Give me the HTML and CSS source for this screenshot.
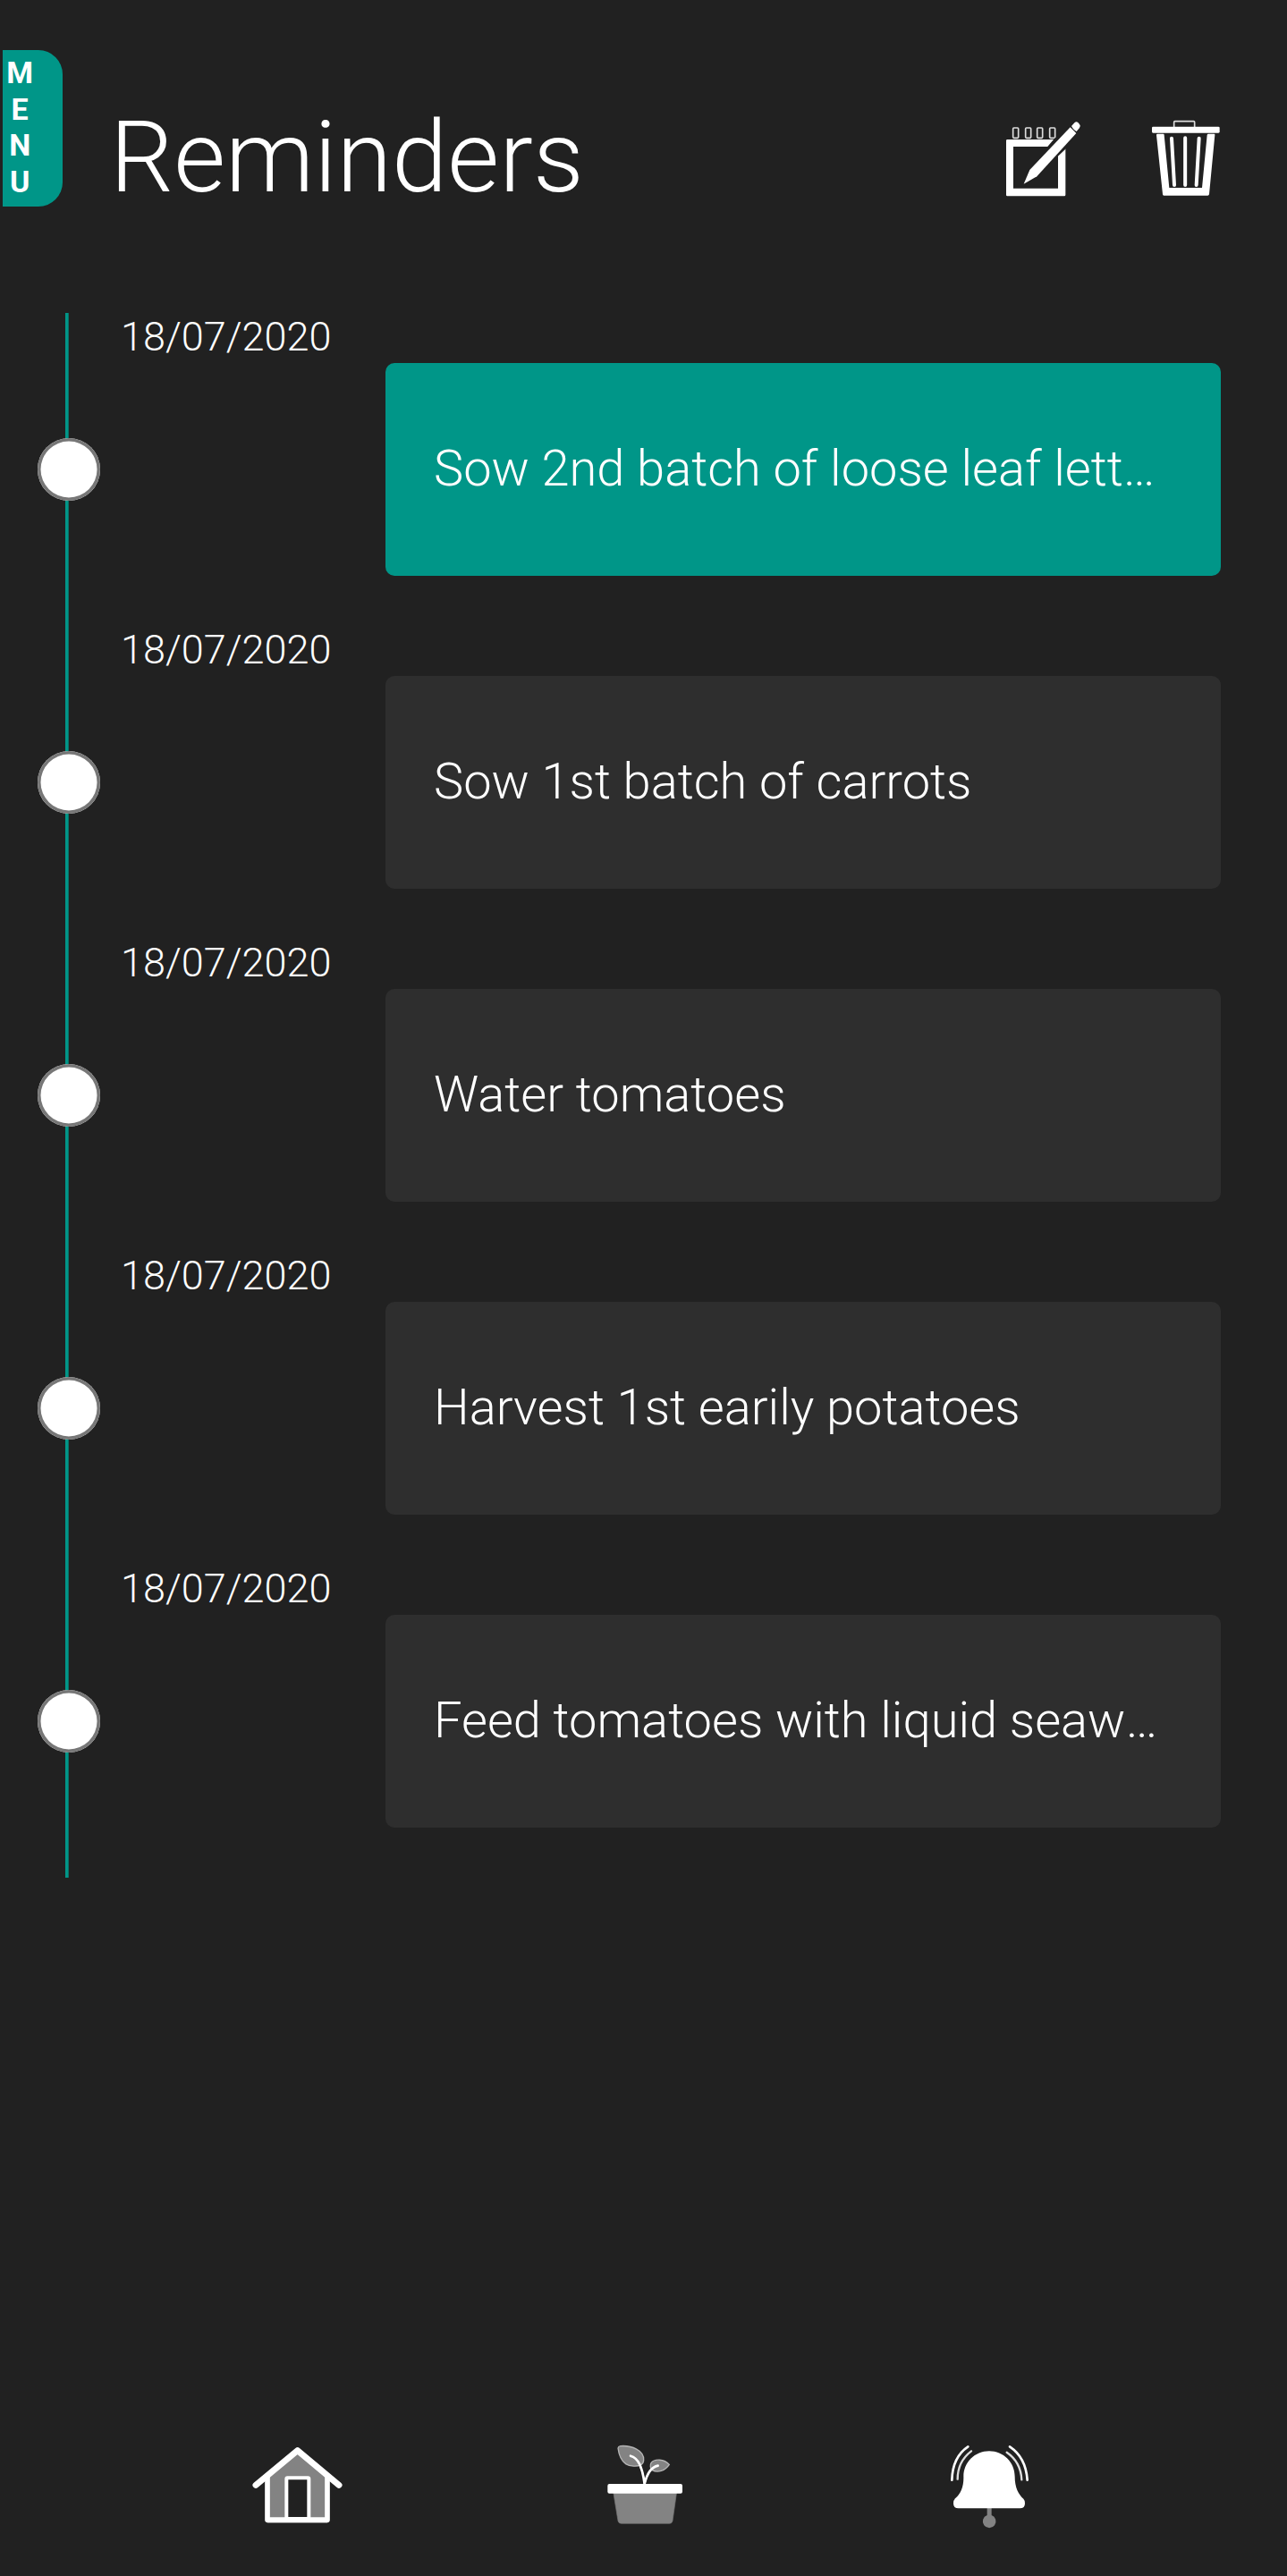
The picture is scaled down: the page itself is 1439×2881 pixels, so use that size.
FILE: index.html
```html
<!DOCTYPE html>
<html lang="en">
<head>
<meta charset="utf-8">
<title>Reminders</title>
<link rel="stylesheet" href="styles.css">
</head>
<body>
<div class="app">
  <header class="header">
    <button class="menu-tab"><span>M</span><span>E</span><span>N</span><span>U</span></button>
    <h1 class="title">Reminders</h1>
    <div class="actions">
      <svg class="action-icon" viewBox="0 0 390 390" aria-label="Edit">
        <g fill="none" stroke="#ddd" stroke-width="5">
          <rect x="98" y="99" width="18" height="34" rx="3"/><rect x="140" y="99" width="18" height="34" rx="3"/><rect x="179" y="99" width="18" height="34" rx="3"/><rect x="221" y="99" width="18" height="34" rx="3"/>
        </g>
        <path fill="#fff" fill-rule="evenodd" d="M79 138H274V324Q274 328 270 328H79Q75 328 75 324V142Q75 138 79 138ZM99 162V302H249V162Z"/>
        <path stroke="#212121" stroke-width="12" fill="#212121" stroke-linejoin="round" d="M242 138L154 242L143 267L168 262L274 162V138Z"/>
        <path fill="#fff" d="M134 287L154 240L290 97L310 117L178 262Z"/>
        <path fill="#fff" d="M294 93L305 81Q310 76 316 81L321 87Q326 92 321 99L311 111Q301 107 294 93Z"/>
      </svg>
      <svg class="action-icon" viewBox="0 0 390 390" aria-label="Delete">
        <path fill="none" stroke="#ddd" stroke-width="5" d="M143 97V80Q143 77 146 77H209Q212 77 212 80V97"/>
        <rect x="69" y="95" width="227" height="21" rx="4" fill="#fff"/>
        <path fill="#fff" d="M88 119H107Q110 119 110 123L127 300H237L254 123Q255 119 258 119H277Q281 119 280 123L261 322Q260 326 256 326H109Q105 326 105 322L84 123Q84 119 88 119Z"/>
        <path stroke="#fff" stroke-width="12" stroke-linecap="round" d="M135 134L144 291M180.500 133V291M227 134L218 291"/>
      </svg>
    </div>
  </header>
  <main class="timeline">
    <section class="row"><div class="rail"><i class="dot"></i></div><time class="date">18/07/2020</time><article class="card active">Sow 2nd batch of loose leaf lett<span>…</span></article></section>
    <section class="row"><div class="rail"><i class="dot"></i></div><time class="date">18/07/2020</time><article class="card">Sow 1st batch of carrots</article></section>
    <section class="row"><div class="rail"><i class="dot"></i></div><time class="date">18/07/2020</time><article class="card">Water tomatoes</article></section>
    <section class="row"><div class="rail"><i class="dot"></i></div><time class="date">18/07/2020</time><article class="card">Harvest 1st earily potatoes</article></section>
    <section class="row"><div class="rail"><i class="dot"></i></div><time class="date">18/07/2020</time><article class="card">Feed tomatoes with liquid seaw<span>…</span></article></section>
  </main>
  <nav class="nav">
    <svg class="nav-icon" viewBox="0 0 390 360" aria-label="Home">
      <path fill="#838383" d="M87 150L188 68L289 150V294H87Z"/>
      <path fill="none" stroke="#fff" stroke-width="17" stroke-linejoin="round" d="M87 146V295H288V146"/>
      <path fill="none" stroke="#fff" stroke-width="21" stroke-linecap="round" stroke-linejoin="round" d="M48 178L188 62L327 178"/>
      <rect x="151" y="154" width="75" height="137" rx="3" fill="#212121" stroke="#fff" stroke-width="12"/>
      <path stroke="#fff" stroke-width="17" d="M87 295H288"/>
    </svg>
    <svg class="nav-icon nav-plant" viewBox="0 0 390 360" aria-label="Plants">
      <path fill="#838383" stroke="#777" stroke-width="2" d="M77 200H290L276 298Q274 307 266 307H104Q95 307 93 298Z"/>
      <g fill="#838383" stroke="#b5b5b5" stroke-width="4">
        <path d="M93 54Q94 48 101 47C139 44 181 62 179 94C179 104 175 107 170 110C158 117 132 116 119 107C101 94 95 70 93 54Z"/>
        <path d="M265 109C248 91 216 88 204 104C200 111 201 122 208 128C226 138 251 130 265 109Z"/>
      </g>
      <path fill="none" stroke="#fff" stroke-width="8" stroke-linecap="round" d="M135 80C160 87 174 113 182 174C188 149 201 118 227 113"/>
      <path fill="none" stroke="#fff" stroke-width="5" d="M167 116Q179 137 182 176Q187 149 198 134"/>
      <rect x="58" y="174" width="251" height="32" rx="6" fill="#fff"/>
    </svg>
    <svg class="nav-icon" viewBox="0 0 390 360" aria-label="Reminders">
      <path fill="#838383" d="M191 250H206V279A22 22 0 1 1 191 279Z"/>
      <path fill="#fff" d="M112 149C112 102 150 64 198 64C246 64 284 102 284 149C284 186 296 208 313 224Q318 229 318 239Q318 256 301 256H95Q78 256 78 239Q78 229 84 223C103 207 113 183 112 149Z"/>
      <g fill="none" stroke="#fff" stroke-linecap="round"><path stroke-width="8" d="M127 49Q75 84 73 161M267 49Q321 85 326 161"/><path stroke="#ddd" stroke-width="7" d="M138 64Q92 99 92 158M257 68Q304 100 307 160"/></g>
    </svg>
  </nav>
</div>
</body>
</html>
```
FILE: styles.css
```css
* { box-sizing: border-box; }
body { margin: 0; background: #212121; color: #fff; font-family: Roboto, sans-serif; font-weight: 300; }
.app { display: flex; flex-direction: column; width: 1439px; height: 2881px; }
.header { display: flex; align-items: flex-start; height: 350px; padding-left: 3.3px; }
.menu-tab { display: flex; flex-direction: column; align-items: center; width: 66.7px; height: 175px; margin: 56px 0 0; padding: 5px 30px 0 1px; border: 0; border-radius: 0 27px 27px 0; background: #009688; color: #fff; font: 700 34px/40.67px Roboto, sans-serif; }
.title { margin: 110px 0 0 53px; font-size: 112px; line-height: 132px; font-weight: 300; }
.actions { display: flex; gap: 35px; margin: 110px 44px 0 auto; }
.action-icon { width: 130px; height: 130px; }
.timeline { display: flex; flex-direction: column; }
.row { display: grid; grid-template-columns: 135px 296px 934px; height: 350px; }
.rail { display: flex; align-items: center; padding-left: 42px; background: linear-gradient(#009688, #009688) 73.3px 0 / 3.7px 100% no-repeat; }
.dot { width: 70px; height: 70px; border-radius: 50%; background: #fff; box-shadow: inset 0 0 0 3.5px #777; }
.date { font-size: 45px; line-height: 53px; }
.card { display: flex; align-items: center; height: 238px; margin-top: 56px; padding: 0 54px 2px; border-radius: 10px; background: #2e2e2e; font-size: 56px; white-space: nowrap; }
.card.active { background: #009688; }
.nav { display: flex; justify-content: space-between; margin-top: auto; padding: 0 269px 41px 270px; }
.nav-icon { width: 130px; height: 120px; }
.nav-plant { margin-left: 10px; }
```
